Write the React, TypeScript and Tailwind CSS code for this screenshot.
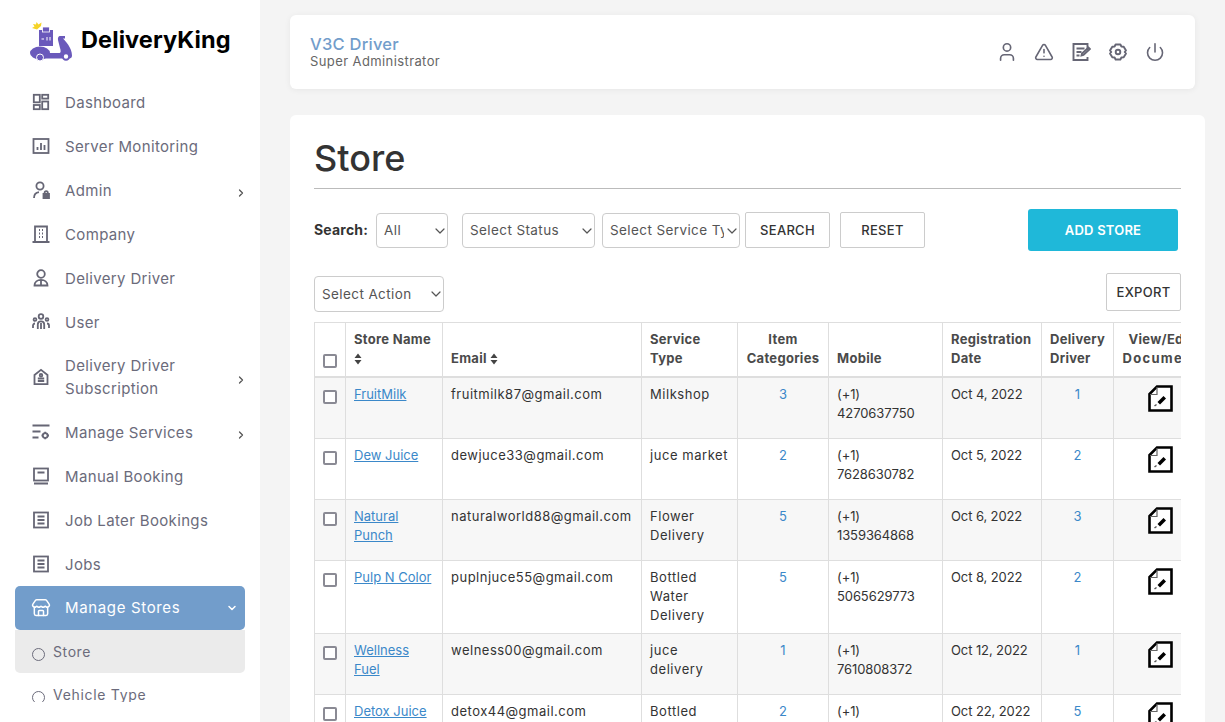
import React from 'react';
import { Store, User, TriangleAlert, Power, ChevronRight, ChevronDown } from 'lucide-react';

const poppins = "font-['Inter','Liberation_Sans',sans-serif]";

const I = ({ children }: { children: React.ReactNode }) => (
  <svg viewBox="0 0 20 20" width="20" height="20" fill="none" stroke="#666675" strokeWidth="1.8" className="shrink-0">
    {children}
  </svg>
);

const DashIcon = () => (
  <I>
    <rect x="2.800" y="2.800" width="6" height="7.500" />
    <rect x="11.200" y="2.800" width="6" height="3.800" />
    <rect x="2.800" y="13" width="6" height="4.200" />
    <rect x="11.200" y="9.500" width="6" height="7.700" />
  </I>
);
const MonitorIcon = () => (
  <I>
    <rect x="2.500" y="3" width="15" height="14" />
    <path d="M6.500 14v-3M10 14V7M13.500 14V9" />
  </I>
);
const AdminIcon = () => (
  <I>
    <circle cx="9" cy="6" r="3.600" />
    <path d="M3 18c0-3.500 2-5.600 5-5.900" />
    <path d="M12.500 14h5.500v4h-5.500z" fill="#666675" />
    <path d="M13.600 14v-1.200a1.600 1.600 0 0 1 3.200 0V14" />
  </I>
);
const CompanyIcon = () => (
  <I>
    <path d="M4 18V2.500h12V18M1.500 18h17" />
    <path d="M8 6h1M11 6h1M8 9.500h1M11 9.500h1M8 13h1M11 13h1" />
  </I>
);
const DriverIcon = () => (
  <I>
    <circle cx="10" cy="6" r="3.800" />
    <path d="M3.500 17.500c0-3.600 2.800-5.600 6.500-5.600s6.500 2 6.500 5.600zM10 12v5.500" />
  </I>
);
const UsersIcon = () => (
  <I>
    <circle cx="10" cy="4.500" r="2.300" />
    <circle cx="4" cy="7.500" r="1.400" />
    <circle cx="16" cy="7.500" r="1.400" />
    <path d="M6.800 17v-4.500a3.200 3.200 0 0 1 6.400 0V17M10 11v6M2 16v-2.500A2 2 0 0 1 4 11.500M18 16v-2.500a2 2 0 0 0-2-2" />
  </I>
);
const SubIcon = () => (
  <I>
    <path d="M3.500 8 10 2.800 16.500 8v9.200h-13z" />
    <circle cx="10" cy="8.300" r="1.300" />
    <path d="M6.800 11.500h6.400M6.800 14h6.400" />
  </I>
);
const ServicesIcon = () => (
  <I>
    <path d="M1.500 3.500h17M1.500 9.500h8M1.500 15.500h6" />
    <circle cx="14.200" cy="13.500" r="2.400" />
    <path d="M14.200 9.800v1.300M14.200 16v1.300M10.500 13.500h1.300M16.700 13.500H18" />
  </I>
);
const BookIcon = () => (
  <I>
    <rect x="3" y="2.500" width="14" height="12" />
    <path d="M6.500 6.500h7M3 17.500h14" />
  </I>
);
const JobsIcon = () => (
  <I>
    <rect x="3" y="2.500" width="14" height="15" />
    <path d="M6.500 6.500h7M6.500 10h7M6.500 13.500h7" />
  </I>
);

const NoteIcon = () => (
  <svg viewBox="0 0 20 20" width="20" height="20" fill="none" stroke="#666675" strokeWidth="1.900">
    <path d="M16.500 8V2H2.500v16h14v-3" />
    <path d="M5.500 6.500h8M5.500 10h5M5.500 13.500h3" />
    <path d="m10.500 13.500.5-2 6.500-6 1.500 1.500-6.500 6z" />
  </svg>
);
const GearIcon = () => (
  <svg viewBox="0 0 20 20" width="20" height="20" fill="none" stroke="#666675" strokeWidth="1.900" strokeLinejoin="round">
    <path d="M7.600 2.500h4.800l1 2 2.300.2 2.300 3.800-1.300 1.500 1.300 1.500-2.300 3.800-2.300.2-1 2H7.600l-1-2-2.300-.2L2 11.500 3.300 10 2 8.500l2.300-3.800 2.300-.2z" />
    <circle cx="10" cy="10" r="2.300" />
  </svg>
);

const DocIcon = () => (
  <svg viewBox="0 0 25 27" width="25" height="27" fill="none" className="inline-block">
    <path d="M9 1.500H23.500v24h-22V9z" fill="#fff" stroke="#000" strokeWidth="2.600" />
    <path d="M9 2v7.500H2" stroke="#666" strokeWidth="1.200" />
    <path d="m9.500 17 6-6 2.500 2.500-6 6z" fill="#000" />
    <path d="m6.500 21 2-1.500" stroke="#555" strokeWidth="1.500" />
  </svg>
);

const Logo = () => (
  <svg viewBox="0 0 44 42" width="44" height="42" className="shrink-0">
    <path d="M2 8 4.500 6.500 3 4l3 .5L6.500 2 8.500 4.500 11.500 2.500 11 6 7 9.500z" fill="#f5d327" />
    <rect x="9" y="10" width="14" height="16" fill="#6a59bb" />
    <rect x="12.500" y="7" width="7" height="5" fill="#6a59bb" stroke="#fff" strokeWidth="0.800" />
    <path d="M11.500 19h2.500M17 17v3.500M20 17v3.500" stroke="#fff" strokeWidth="1" />
    <ellipse cx="10" cy="33" rx="10" ry="6.500" fill="#6a59bb" />
    <path d="M12 33h17c2 0 2-2 1-5l-2-8c-.5-2 .5-4 2-4h5v2.500h-2c2 2 9 9 9 17 0 2-1 3-3 3H12z" fill="#6a59bb" />
    <circle cx="10" cy="37.500" r="3.500" fill="#6a59bb" stroke="#fff" strokeWidth="1" />
    <circle cx="36" cy="36.500" r="3.200" fill="#fff" stroke="#6a59bb" strokeWidth="2" />
  </svg>
);

const NavItem = ({ icon, label, arrow }: { icon: React.ReactNode; label: React.ReactNode; arrow?: boolean }) => (
  <div className="flex min-h-[44px] items-center pl-[31px] pr-[13px]">
    <span className="flex w-[34px] shrink-0 items-center">{icon}</span>
    <span className="flex-1 text-[15px] leading-[23px] tracking-[0.35px] text-[#6b6b7b]">{label}</span>
    {arrow && <ChevronRight size={12} strokeWidth={2.500} className="mt-[5px] text-[#555]" />}
  </div>
);

const rows = [
  { name: ['FruitMilk'], email: 'fruitmilk87@gmail.com', type: ['Milkshop'], cats: 3, tel: '4270637750', date: 'Oct 4, 2022', drv: 1, h: 'h-[61px] bg-[#f7f7f7]' },
  { name: ['Dew Juice'], email: 'dewjuce33@gmail.com', type: ['juce market'], cats: 2, tel: '7628630782', date: 'Oct 5, 2022', drv: 2, h: 'h-[61px] bg-white' },
  { name: ['Natural', 'Punch'], email: 'naturalworld88@gmail.com', type: ['Flower', 'Delivery'], cats: 5, tel: '1359364868', date: 'Oct 6, 2022', drv: 3, h: 'h-[61px] bg-[#f7f7f7]' },
  { name: ['Pulp N Color'], email: 'puplnjuce55@gmail.com', type: ['Bottled', 'Water', 'Delivery'], cats: 5, tel: '5065629773', date: 'Oct 8, 2022', drv: 2, h: 'h-[73px] bg-white' },
  { name: ['Wellness', 'Fuel'], email: 'welness00@gmail.com', type: ['juce', 'delivery'], cats: 1, tel: '7610808372', date: 'Oct 12, 2022', drv: 1, h: 'h-[61px] bg-[#f7f7f7]' },
  { name: ['Detox Juice'], email: 'detox44@gmail.com', type: ['Bottled', 'Water'], cats: 2, tel: '1234567890', date: 'Oct 22, 2022', drv: 5, h: 'h-[72px] bg-white' },
];

const Sort = () => (
  <svg viewBox="0 0 8 12" width="8" height="12" className="inline-block">
    <path d="M4 0.500 7.500 5H.5zM4 11.500.5 7h7z" fill="#444" />
  </svg>
);

const Check = () => <span className="block h-[14px] w-[14px] rounded-[2px] border-2 border-[#8a8a94] bg-white" />;

const Select = ({ label, className }: { label: string; className: string }) => (
  <div className={`relative shrink-0 ${className}`}>
    <select className="h-full w-full appearance-none rounded border border-[#ccc] bg-white pl-[7px] pr-[15px] text-[13.500px] tracking-[0.4px] text-[#555]">
      <option>{label}</option>
    </select>
    <ChevronDown size={16} strokeWidth={1.800} className="pointer-events-none absolute right-0 top-[10px] text-[#555]" />
  </div>
);

const thBase = 'border border-[#dedede] border-b-2 px-2 pb-[8px] pt-[7px] align-bottom text-[13px] font-bold leading-[19px] tracking-[0.3px] text-[#4a4a4a]';
const th = `${thBase} text-left`;
const thc = `${thBase} text-center whitespace-nowrap overflow-hidden`;
const tdBase = 'border border-[#dedede] px-2 pt-[7px] align-top text-[13px] leading-[19px]';
const td = `${tdBase} text-[#333]`;
const tdLink = `${tdBase} text-center text-[#3b88c9]`;
const btnCls = 'flex items-center justify-center rounded-[2px] border border-[#ccc] bg-white text-[13px] font-medium tracking-[0.3px] text-[#333]';

export default function App() {
  return (
    <div className={`flex h-screen overflow-hidden bg-[#f4f4f4] ${poppins}`}>
      <aside className="h-full w-[260px] shrink-0 bg-white">
        <div className="h-[702px] overflow-hidden">
          <div className="flex h-[80px] items-start gap-[7px] pl-[30px] pt-[20px]">
            <Logo />
            <span className="mt-[5px] text-[23.500px] font-bold leading-[30px] tracking-[0.1px] text-black">DeliveryKing</span>
          </div>
          <NavItem icon={<DashIcon />} label="Dashboard" />
          <NavItem icon={<MonitorIcon />} label="Server Monitoring" />
          <NavItem icon={<AdminIcon />} label="Admin" arrow />
          <NavItem icon={<CompanyIcon />} label="Company" />
          <NavItem icon={<DriverIcon />} label="Delivery Driver" />
          <NavItem icon={<UsersIcon />} label="User" />
          <div className="py-[10px]">
            <NavItem icon={<SubIcon />} label={<>Delivery Driver<br />Subscription</>} arrow />
          </div>
          <NavItem icon={<ServicesIcon />} label="Manage Services" arrow />
          <NavItem icon={<BookIcon />} label="Manual Booking" />
          <NavItem icon={<JobsIcon />} label="Job Later Bookings" />
          <NavItem icon={<JobsIcon />} label="Jobs" />
          <div className="mx-[15px] flex h-[44px] items-center rounded-[5px] bg-[#729dcb] pl-[16px] pr-[7px]">
            <Store size={20} strokeWidth={1.800} className="mr-[14px] shrink-0 text-white" />
            <span className="mt-px flex-1 text-[15px] tracking-[0.65px] text-white">Manage Stores</span>
            <ChevronDown size={12} strokeWidth={3} className="text-white" />
          </div>
          <div className="mx-[15px] flex h-[43px] items-center gap-[8px] rounded-b-[5px] bg-[#ebebeb] pl-[17px]">
            <span className="mt-[5px] h-[13px] w-[13px] rounded-full border-[1.500px] border-[#6b6b7b]" />
            <span className="text-[14px] tracking-[0.6px] text-[#6b6b7b]">Store</span>
          </div>
          <div className="mx-[15px] flex h-[43px] items-center gap-[8px] pl-[17px]">
            <span className="mt-[5px] h-[13px] w-[13px] rounded-full border-[1.500px] border-[#6b6b7b]" />
            <span className="text-[14px] tracking-[0.7px] text-[#6b6b7b]">Vehicle Type</span>
          </div>
        </div>
      </aside>

      <main className="min-w-0 flex-1 pl-[30px] pr-[20px] pt-[15px]">
        <header className="mr-[10px] flex h-[74px] items-center justify-between rounded-[6px] bg-white pl-[20px] pr-[30px] shadow-[0_1px_6px_rgba(0,0,0,0.06)]">
          <div>
            <div className="text-[16.500px] font-medium leading-[18px] tracking-[0.25px] text-[#729dcb]">V3C Driver</div>
            <div className="text-[13px] leading-[17px] tracking-[0.4px] text-[#666]">Super Administrator</div>
          </div>
          <div className="flex items-center gap-[17px]">
            <User size={22} strokeWidth={1.800} className="-mx-[1px] text-[#666675]" />
            <TriangleAlert size={20} strokeWidth={1.900} className="text-[#666675]" />
            <NoteIcon />
            <GearIcon />
            <Power size={20} strokeWidth={1.900} className="text-[#666675]" />
          </div>
        </header>

        <section className="mt-[26px] h-[700px] overflow-hidden rounded-[6px] bg-white px-[24px] pt-[18px]">
          <h1 className="border-b border-[#bbb] pb-[5px] text-[36px] font-medium leading-[50px] text-[#333]">Store</h1>

          <div className="mt-[20px] flex items-center">
            <span className="mb-[2px] mr-[7px] w-[55px] text-[14px] font-bold tracking-[0.2px] text-[#333]">Search:</span>
            <Select label="All" className="mr-[14px] h-[35px] w-[72px]" />
            <Select label="Select Status" className="mr-[7px] h-[35px] w-[133px]" />
            <Select label="Select Service Type" className="mr-[5px] h-[35px] w-[138px]" />
            <button className={`${btnCls} mr-[10px] h-[36px] w-[85px] pt-px`}>SEARCH</button>
            <button className={`${btnCls} h-[36px] w-[85px] pt-px`}>RESET</button>
            <button className="ml-[103px] flex h-[42px] w-[150px] items-center justify-center rounded-[3px] bg-[#1fb8d9] pt-px text-[13px] font-semibold tracking-[0.2px] text-white">ADD STORE</button>
          </div>

          <div className="mt-[22px] flex items-start justify-between">
            <Select label="Select Action" className="mt-[3px] h-[36px] w-[130px]" />
            <button className={`${btnCls} h-[38px] w-[75px] pt-px`}>EXPORT</button>
          </div>

          <div className="mt-[10px] overflow-hidden">
            <table className="w-[893px] table-fixed border-collapse">
              <colgroup>
                <col className="w-[31px]" />
                <col className="w-[97px]" />
                <col className="w-[199px]" />
                <col className="w-[96px]" />
                <col className="w-[91px]" />
                <col className="w-[114px]" />
                <col className="w-[99px]" />
                <col className="w-[72px]" />
                <col className="w-[94px]" />
              </colgroup>
              <thead>
                <tr className="h-[53px]">
                  <th className={th}><Check /></th>
                  <th className={th}>Store Name<br /><Sort /></th>
                  <th className={th}>Email <Sort /></th>
                  <th className={th}>Service<br />Type</th>
                  <th className={thc}>Item<br />Categories</th>
                  <th className={th}>Mobile</th>
                  <th className={th}>Registration<br />Date</th>
                  <th className={th}>Delivery<br />Driver</th>
                  <th className={thc}>View/Edit<br /><span className="tracking-[1.300px]">Document</span></th>
                </tr>
              </thead>
              <tbody>
                {rows.map(r => (
                  <tr key={r.email} className={r.h}>
                    <td className={td}><span className="mt-[5px] block"><Check /></span></td>
                    <td className={tdBase}>
                      <span className="text-[#3b88c9] underline">
                        {r.name.map(n => <span key={n} className="block">{n}</span>)}
                      </span>
                    </td>
                    <td className={`${td} tracking-[0.5px]`}>{r.email}</td>
                    <td className={`${td} tracking-[0.55px]`}>{r.type.map(t => <span key={t} className="block">{t}</span>)}</td>
                    <td className={tdLink}>{r.cats}</td>
                    <td className={`${td} tracking-[-0.1px]`}>(+1)<br />{r.tel}</td>
                    <td className={`${td} tracking-[-0.1px]`}>{r.date}</td>
                    <td className={tdLink}>{r.drv}</td>
                    <td className={`${td} text-center`}><DocIcon /></td>
                  </tr>
                ))}
              </tbody>
            </table>
          </div>
        </section>
      </main>
    </div>
  );
}
